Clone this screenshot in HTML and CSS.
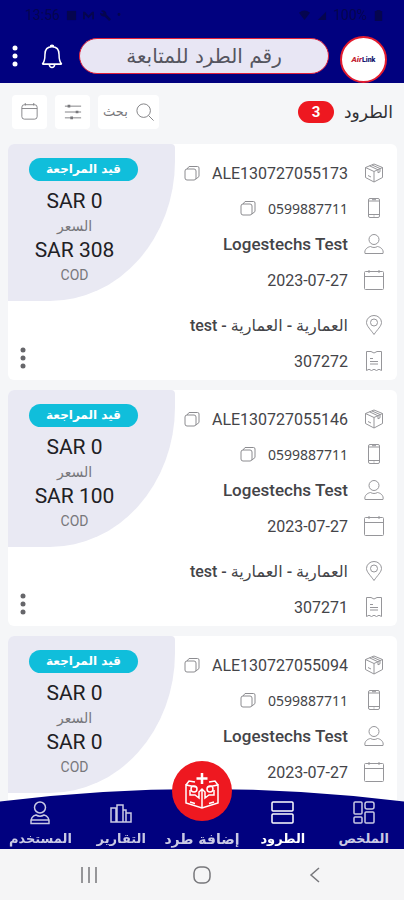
FILE: index.html
```html
<!DOCTYPE html>
<html lang="ar" dir="rtl">
<head>
<meta charset="utf-8">
<meta name="viewport" content="width=device-width, initial-scale=1">
<title>الطرود</title>
<link rel="stylesheet" href="styles.css">
</head>
<body>
<svg class="sprite" aria-hidden="true">
  <symbol id="box" viewBox="0 0 20 20"><path d="M10 1 18.500 4.500v10L10 19l-8.500-4.500v-10zM1.500 4.500 10 8.500l8.500-4M10 8.500V19M5.500 2.800l8.500 4v3l2-1V5.500L8 2M4 12.500l3 1.500"/></symbol>
  <symbol id="phone" viewBox="0 0 20 20"><rect x="4.500" y=".5" width="11" height="19" rx="1.500"/><path d="M4.500 3h11M4.500 16.500h11M8 1.700h4M9.500 18h1"/></symbol>
  <symbol id="user" viewBox="0 0 20 20"><circle cx="10" cy="5.500" r="5"/><path d="M1 19.500c-1-4 2.500-6.500 5.500-7 2 1.300 5 1.300 7 0 3 .5 6.500 3 5.500 7z"/></symbol>
  <symbol id="calendar" viewBox="0 0 20 20"><rect x=".5" y="1.500" width="19" height="18" rx="1"/><path d="M.5 6.500h19M5 0v3M15 0v3"/></symbol>
  <symbol id="pin" viewBox="0 0 20 20"><path d="M10 19.500C7 15 2.500 11 2.500 7.500a7.500 7 0 0 1 15 0C17.500 11 13 15 10 19.500z"/><circle cx="10" cy="7.500" r="3.500"/></symbol>
  <symbol id="receipt" viewBox="0 0 20 20"><path d="M2.500.5H7l3 1.500 3-1.500h4.500v19L15 18.300l-2.500 1.200-2.500-1.200-2.500 1.200L5 18.300l-2.500 1.200zM6 7.500h3M6 10.500h8M6 13h8"/></symbol>
  <symbol id="copy" viewBox="0 0 16 16"><rect x="1" y="4" width="11" height="11" rx="2"/><path d="M3 4 5 1.500h8.500a1.500 1.500 0 0 1 1.500 1.500v8.500L12 14"/></symbol>
  <symbol id="dots" viewBox="0 0 6 22"><circle cx="3" cy="3" r="2.500"/><circle cx="3" cy="11" r="2.500"/><circle cx="3" cy="19" r="2.500"/></symbol>
</svg>

<div class="app">
  <header class="top">
    <div class="status" dir="ltr">
      <span class="status-group">13:56
        <svg class="status-icon" viewBox="0 0 12 12"><path d="M1 1h10v10H1z"/></svg>
        <svg class="status-icon" viewBox="0 0 12 12"><path d="M0 2h2l4 4 4-4h2v8h-2V5L6 9 2 5v5H0z"/></svg>
        <svg class="status-icon" viewBox="0 0 12 12"><path d="M1 1a4 4 0 0 1 6 4l5 5-2 2-5-5A4 4 0 0 1 0 3l3 1 1-1z"/></svg>
        <span>•</span>
      </span>
      <span class="status-group">
        <svg class="status-icon" viewBox="0 0 12 12"><path d="M0 3q6-5 12 0L6 11z"/></svg>
        <svg class="status-icon" viewBox="0 0 12 12"><path d="M11 2v9H2z"/></svg>
        100%
        <svg class="status-icon" viewBox="0 0 12 12"><path d="M4 0h4v1h2v11H2V1h2z"/></svg>
      </span>
    </div>
    <div class="bar">
      <a class="logo" href="#" dir="ltr" aria-label="AirLink"><span class="logo-air">Air</span><span>Link</span></a>
      <input class="track" type="text" aria-label="رقم الطرد للمتابعة" placeholder="رقم الطرد للمتابعة">
      <button class="plain bell" type="button" aria-label="الإشعارات"><svg viewBox="0 0 20 24"><path d="M1 19.500h18M1 19.500c2-2 2.500-4 2.500-9C3.500 6 6 3.500 10 3.500s6.500 2.500 6.500 7c0 5 .5 7 2.500 9M8.500 3.500a1.500 1.500 0 1 1 3 0M7.500 20c.5 3.500 4.500 3.500 5 0"/></svg></button>
      <button class="plain more" type="button" aria-label="المزيد"><svg viewBox="0 0 6 22"><use href="#dots"/></svg></button>
    </div>
  </header>

  <div class="tools">
    <h1>الطرود</h1>
    <span class="count">3</span>
    <div class="actions">
      <button class="tool" type="button"><svg viewBox="0 0 20 20"><circle cx="8.500" cy="8.500" r="7.500"/><path d="m14 14 5.500 5.500"/></svg>بحث</button>
      <button class="tool" type="button" aria-label="تصفية"><svg viewBox="0 0 20 20"><path d="M1 3.500h18M1 10h18M1 16.500h18"/><path class="knobs" d="M4 3.500h3M13 10h3M7 16.500h3"/></svg></button>
      <button class="tool small" type="button" aria-label="التاريخ"><svg viewBox="0 0 20 20"><rect x="1" y="2" width="18" height="17" rx="3"/><path d="M1 6.500h18M5 0v3M15 0v3"/></svg></button>
    </div>
  </div>

  <main class="list">
    <article class="card">
      <ul class="rows">
        <li><svg class="icon"><use href="#box"/></svg><span>ALE130727055173</span><button class="plain copy" type="button" aria-label="نسخ"><svg><use href="#copy"/></svg></button></li>
        <li><svg class="icon"><use href="#phone"/></svg><span class="number">0599887711</span><button class="plain copy" type="button" aria-label="نسخ"><svg><use href="#copy"/></svg></button></li>
        <li><svg class="icon"><use href="#user"/></svg><span class="name">Logestechs Test</span></li>
        <li><svg class="icon"><use href="#calendar"/></svg><span>2023-07-27</span></li>
        <li class="place"><svg class="icon"><use href="#pin"/></svg><span>العمارية - العمارية - test</span></li>
        <li><svg class="icon"><use href="#receipt"/></svg><span>307272</span></li>
      </ul>
      <div class="side">
        <div class="price">
          <span class="state">قيد المراجعة</span>
          <dl dir="ltr"><dd>SAR 0</dd><dt>السعر</dt><dd>SAR 308</dd><dt>COD</dt></dl>
        </div>
        <button class="plain menu" type="button" aria-label="خيارات"><svg><use href="#dots"/></svg></button>
      </div>
    </article>

    <article class="card">
      <ul class="rows">
        <li><svg class="icon"><use href="#box"/></svg><span>ALE130727055146</span><button class="plain copy" type="button" aria-label="نسخ"><svg><use href="#copy"/></svg></button></li>
        <li><svg class="icon"><use href="#phone"/></svg><span class="number">0599887711</span><button class="plain copy" type="button" aria-label="نسخ"><svg><use href="#copy"/></svg></button></li>
        <li><svg class="icon"><use href="#user"/></svg><span class="name">Logestechs Test</span></li>
        <li><svg class="icon"><use href="#calendar"/></svg><span>2023-07-27</span></li>
        <li class="place"><svg class="icon"><use href="#pin"/></svg><span>العمارية - العمارية - test</span></li>
        <li><svg class="icon"><use href="#receipt"/></svg><span>307271</span></li>
      </ul>
      <div class="side">
        <div class="price">
          <span class="state">قيد المراجعة</span>
          <dl dir="ltr"><dd>SAR 0</dd><dt>السعر</dt><dd>SAR 100</dd><dt>COD</dt></dl>
        </div>
        <button class="plain menu" type="button" aria-label="خيارات"><svg><use href="#dots"/></svg></button>
      </div>
    </article>

    <article class="card">
      <ul class="rows">
        <li><svg class="icon"><use href="#box"/></svg><span>ALE130727055094</span><button class="plain copy" type="button" aria-label="نسخ"><svg><use href="#copy"/></svg></button></li>
        <li><svg class="icon"><use href="#phone"/></svg><span class="number">0599887711</span><button class="plain copy" type="button" aria-label="نسخ"><svg><use href="#copy"/></svg></button></li>
        <li><svg class="icon"><use href="#user"/></svg><span class="name">Logestechs Test</span></li>
        <li><svg class="icon"><use href="#calendar"/></svg><span>2023-07-27</span></li>
      </ul>
      <div class="side">
        <div class="price">
          <span class="state">قيد المراجعة</span>
          <dl dir="ltr"><dd>SAR 0</dd><dt>السعر</dt><dd>SAR 0</dd><dt>COD</dt></dl>
        </div>
      </div>
    </article>
  </main>

  <footer class="dock">
    <svg class="curve" viewBox="0 0 404 14" preserveAspectRatio="none" aria-hidden="true"><path d="M0 14V12.500Q100 0 202 0T404 12.500V14z"/></svg>
    <nav class="tabs">
      <a href="#"><svg viewBox="0 0 24 24"><rect x="2" y="1" width="8" height="12" rx="1"/><rect x="13" y="1" width="9" height="7" rx="2"/><rect x="2" y="16" width="8" height="6" rx="1"/><rect x="13" y="11" width="9" height="11" rx="1"/></svg>الملخص</a>
      <a href="#" class="current"><svg viewBox="0 0 24 24"><rect x="1" y="1" width="21" height="9" rx="1"/><rect x="1" y="13" width="21" height="9" rx="1"/></svg>الطرود</a>
      <a href="#" class="add"><span class="add-mark"><svg viewBox="0 0 40 40"><path class="plus" d="M20 2v11M14.500 7.500h11"/><path d="M14 16 4 14v18l16 5 16-5V14l-10 2M20 18v19M4 14l3-4 6 1M36 14l-3-4-6 1M8 19v5h5l4 3v-6l3-3 3 3v6l4-3h5v-5M8 31l5 1.500M32 31l-5 1.500"/><circle cx="12" cy="18" r="3"/><circle cx="28" cy="18" r="3"/></svg></span>إضافة طرد</a>
      <a href="#"><svg viewBox="0 0 24 24"><path d="M2 21V7h5v14zM8 21V4h6v17M14 21V9h3v12M17 21V12h5v9zM2 21h20"/></svg>التقارير</a>
      <a href="#"><svg viewBox="0 0 24 24"><circle cx="12" cy="6.500" r="5.500"/><path d="M3 22.500c-1-5 2-8 5-8.500 2.500 1.500 5.500 1.500 8 0 3 .5 6 3.500 5 8.500zM3 19h18"/></svg>المستخدم</a>
    </nav>
    <div class="system" dir="ltr">
      <button class="plain" type="button" aria-label="التطبيقات"><svg viewBox="0 0 18 18"><path d="M2 1v16M9 1v16M16 1v16"/></svg></button>
      <button class="plain" type="button" aria-label="الرئيسية"><svg viewBox="0 0 18 18"><rect x="1" y="1" width="16" height="16" rx="6"/></svg></button>
      <button class="plain" type="button" aria-label="رجوع"><svg viewBox="0 0 18 18"><path d="M13 2 5 9l8 7"/></svg></button>
    </div>
  </footer>
</div>
</body>
</html>
```
FILE: styles.css
```css
* { box-sizing: border-box; }

body {
  margin: 0;
  background: #f5f6f8;
  color: #444448;
  font-family: Roboto, "DejaVu Sans", sans-serif;
  font-size: 16px;
}

svg {
  display: block;
  flex: none;
  fill: none;
  stroke: currentColor;
}

.sprite { position: absolute; width: 0; height: 0; }

button { font: inherit; color: inherit; cursor: pointer; }

.plain {
  display: flex;
  align-items: center;
  justify-content: center;
  padding: 0;
  border: 0;
  background: none;
}

.app {
  display: flex;
  flex-direction: column;
  height: 100vh;
}

/* Header */
.top { background: #01017f; color: #fff; }

.status {
  display: flex;
  justify-content: space-between;
  height: 30px;
  padding: 0 20px 0 25px;
  color: #05054f;
  font-size: 14px;
}

.status-group { display: flex; align-items: center; gap: 6px; }
.status-icon { width: 11px; height: 11px; fill: currentColor; stroke: none; }

.bar {
  display: flex;
  align-items: center;
  height: 53px;
  padding: 6px 17px 0 11px;
}

.logo {
  display: flex;
  flex: none;
  align-items: center;
  justify-content: center;
  width: 47px;
  height: 47px;
  border: 2px solid #e31b2e;
  border-radius: 50%;
  background: #fff;
  color: #17176e;
  font-size: 7px;
  font-weight: 900;
  text-decoration: none;
}

.logo-air { color: #c32434; font-size: 8px; font-style: italic; }

.track {
  flex: 1;
  min-width: 0;
  height: 36px;
  margin: 0 11px 7px 16px;
  padding: 0 16px;
  border: 1px solid #e0203a;
  border-radius: 18px;
  background: #e8e6f4;
  color: #333;
  font: 20px "DejaVu Sans", sans-serif;
  text-align: center;
}

.track::placeholder { color: #55555f; opacity: 1; }

.bell { margin: 0 0 7px 22px; }
.bell svg { width: 22px; height: 26px; stroke-width: 1.400; }
.more { margin-bottom: 7px; }
.more svg { width: 8px; height: 22px; fill: currentColor; stroke: none; }

/* Toolbar */
.tools {
  display: flex;
  flex: none;
  align-items: center;
  height: 61px;
  padding: 0 11px 4px 12px;
}

h1 {
  margin: 0;
  color: #303034;
  font: 17px "DejaVu Sans", sans-serif;
}

.count {
  width: 36px;
  margin-right: 10px;
  border-radius: 11px;
  background: #ee1820;
  color: #fff;
  font-size: 15px;
  font-weight: 700;
  line-height: 22px;
  text-align: center;
}

.actions { display: flex; gap: 8px; margin-right: auto; }

.tool {
  display: flex;
  align-items: center;
  justify-content: center;
  gap: 8px;
  min-width: 35px;
  height: 34px;
  padding: 0 5px;
  border: 0;
  border-radius: 4px;
  background: #fff;
  color: #77777b;
  font: 13px "DejaVu Sans", sans-serif;
}

.tool svg { width: 18px; height: 18px; }
.tool.small svg { width: 17px; height: 17px; }
.knobs { stroke-width: 3; }

/* Parcel cards */
.list {
  display: flex;
  flex: 1;
  flex-direction: column;
  gap: 10px;
  min-height: 0;
  padding: 0 7px 0 8px;
  overflow-y: auto;
  scrollbar-width: none;
}

.card {
  display: flex;
  flex: none;
  justify-content: space-between;
  min-height: 236px;
  border-radius: 6px;
  background: #fff;
}

.rows {
  flex: 1;
  margin: 0;
  padding: 12px 13px 0 0;
  list-style: none;
}

.rows li {
  display: flex;
  align-items: center;
  gap: 16px;
  height: 36px;
  white-space: nowrap;
}

.rows li:first-child { height: 34px; }
.rows .place { margin-top: 9px; font-weight: 500; }
.icon { width: 20px; height: 20px; color: #96969a; stroke-width: 1px; }
.rows .number { font-family: "Noto Sans", sans-serif; font-size: 14px; }
.rows .name { font-size: 17px; font-weight: 500; }
.copy { margin-right: -4px; color: #8c8c90; }
.copy svg { width: 16px; height: 16px; }

.side {
  display: flex;
  flex: none;
  flex-direction: column;
  justify-content: space-between;
  width: 167px;
  margin-right: -167px;
}

.price {
  height: 157px;
  padding: 14px 37px 0 21px;
  border-radius: 6px 4px 125px 0 / 6px 4px 140px 0;
  background: #e9e9f3;
}

.state {
  display: block;
  border-radius: 12px;
  background: #10bedb;
  color: #fff;
  font: bold 12px/23px "DejaVu Sans", sans-serif;
  text-align: center;
}

.price dl { margin: 8px 18px 0 0; text-align: center; }
.price dd { margin: 0; color: #202024; font-size: 21px; line-height: 25px; white-space: nowrap; }
.price dt { color: #77777b; font-size: 14px; line-height: 24px; }

.menu { align-self: flex-end; margin: 0 0 11px 12px; }
.menu svg { width: 6px; height: 22px; fill: #66666a; stroke: none; }

/* Bottom navigation */
.dock {
  position: fixed;
  right: 0;
  bottom: 0;
  left: 0;
}

.curve { width: 100%; height: 14px; fill: #01017f; stroke: none; }

.tabs {
  display: grid;
  grid-template: 46px / repeat(5, 1fr);
  background: #01017f;
}

.tabs a {
  display: flex;
  flex-direction: column;
  align-items: center;
  justify-content: flex-end;
  gap: 6px;
  min-width: 0;
  padding-bottom: 2px;
  color: #c9c9e4;
  font: bold 13px/16px "DejaVu Sans", sans-serif;
  text-decoration: none;
  white-space: nowrap;
}

.tabs svg { width: 24px; height: 24px; stroke-width: 1.500; }
.tabs .current { color: #fff; }
.tabs .add { gap: 10px; font-size: 14px; }

.add-mark {
  display: flex;
  flex: none;
  align-items: center;
  justify-content: center;
  width: 60px;
  height: 60px;
  border-radius: 50%;
  background: #ee1820;
  color: #fff;
}

.tabs .add-mark svg { width: 40px; height: 40px; }
.plus { stroke-width: 2.500; }

.system {
  display: flex;
  align-items: center;
  justify-content: center;
  gap: 95px;
  height: 51px;
  background: #f5f5f6;
  color: #77777b;
}

.system svg { width: 18px; height: 18px; stroke-width: 1.500; }
```
